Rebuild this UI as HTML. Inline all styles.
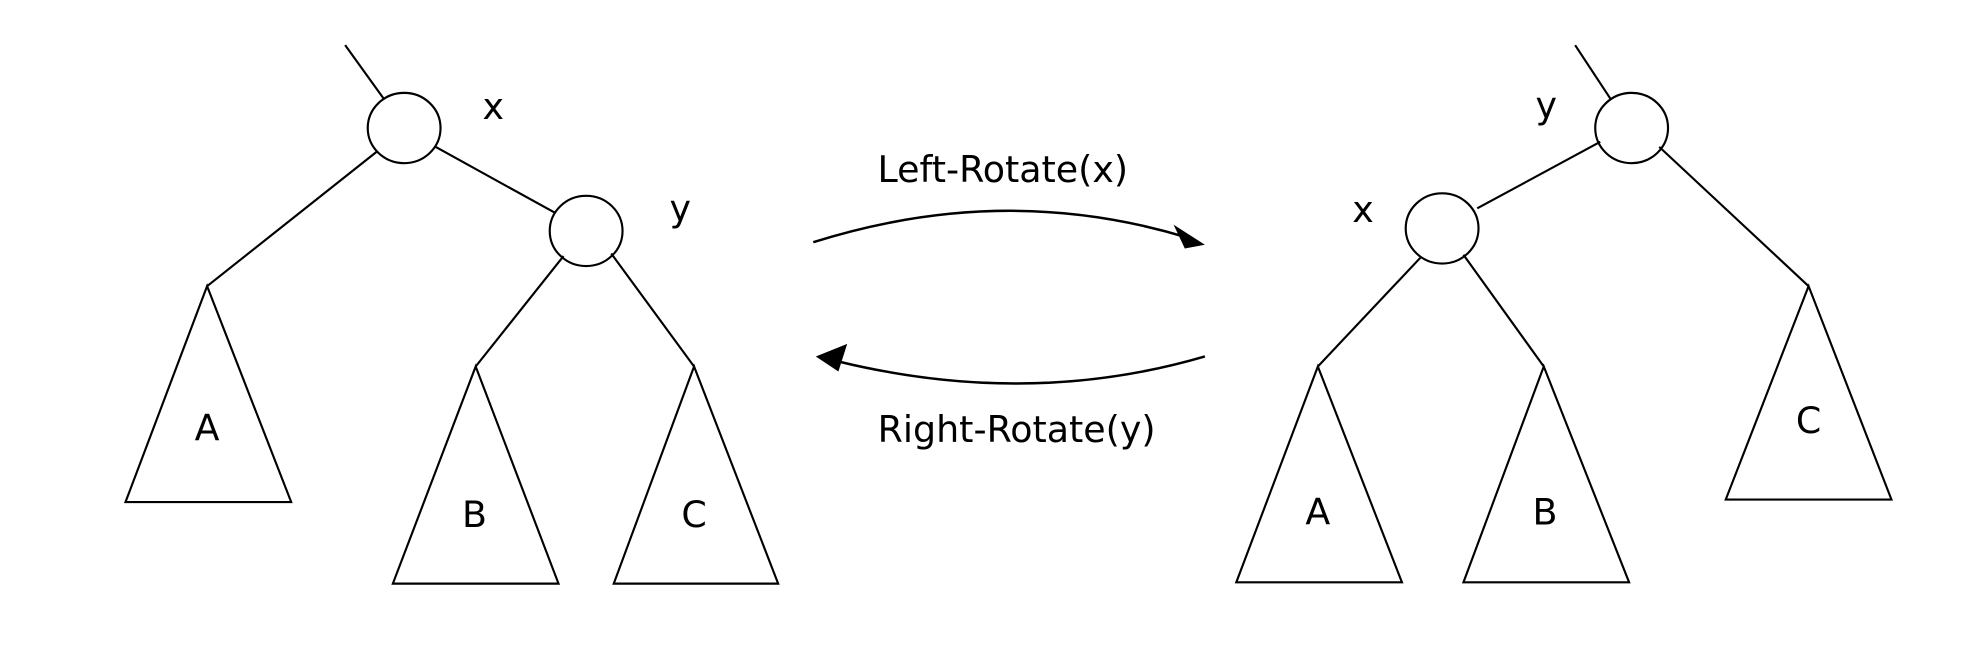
<!DOCTYPE html>
<html><head><style>html,body{margin:0;padding:0;background:#fff;}svg{display:block}</style></head>
<body>
<svg width="1968" height="646" viewBox="0 0 1568 514.7" preserveAspectRatio="none" xmlns="http://www.w3.org/2000/svg">
<g fill="none" stroke="#000" stroke-width="1.7">
<line x1="275" y1="36" x2="306" y2="79"/>
<ellipse cx="322" cy="102" rx="29" ry="28" fill="#fff"/>
<line x1="300" y1="121" x2="165" y2="228"/>
<line x1="347" y1="117" x2="443" y2="170"/>
<ellipse cx="467" cy="184" rx="29" ry="28" fill="#fff"/>
<line x1="449" y1="204" x2="379" y2="292"/>
<line x1="487" y1="202" x2="553" y2="292"/>
<polygon points="165,228 100,400 232,400"/>
<polygon points="379,292 313,465 445,465"/>
<polygon points="553,292 489,465 620,465"/>
<path d="M648,193 Q800,145 945,189" stroke-width="2"/>
<path d="M960,284 Q820,325 668,288" stroke-width="2"/>
<line x1="1255" y1="36" x2="1284" y2="80"/>
<ellipse cx="1300" cy="102" rx="29" ry="28" fill="#fff"/>
<line x1="1275" y1="113" x2="1177" y2="166"/>
<ellipse cx="1149" cy="182" rx="29" ry="28" fill="#fff"/>
<line x1="1322" y1="117" x2="1441" y2="228"/>
<polygon points="1441,228 1375,398 1507,398"/>
<line x1="1132" y1="205" x2="1050" y2="292"/>
<line x1="1166" y1="203" x2="1230" y2="292"/>
<polygon points="1050,292 985,464 1117,464"/>
<polygon points="1230,292 1166,464 1298,464"/>
</g>
<polygon points="960,195 935,179 944,198" fill="#000"/>
<polygon points="650,284 675,274 668,296" fill="#000"/>
<g font-family="'DejaVu Sans','Liberation Sans',sans-serif" font-size="29" fill="#000" text-anchor="middle">
<text x="393" y="95">x</text>
<text x="542" y="176">y</text>
<text x="165" y="351">A</text>
<text x="378" y="420">B</text>
<text x="553" y="420">C</text>
<text x="799" y="145">Left-Rotate(x)</text>
<text x="810" y="352">Right-Rotate(y)</text>
<text x="1232" y="94">y</text>
<text x="1086" y="177">x</text>
<text x="1441" y="345">C</text>
<text x="1050" y="418">A</text>
<text x="1231" y="418">B</text>
</g>
</svg>
</body></html>
